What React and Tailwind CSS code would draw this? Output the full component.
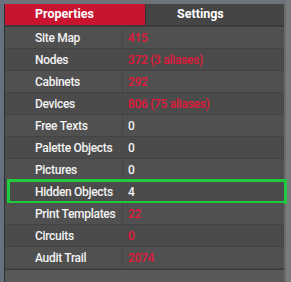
import React from "react";

const rows = [
  { label: "Site Map", value: "415", red: true },
  { label: "Nodes", value: "372 (3 aliases)", red: true },
  { label: "Cabinets", value: "292", red: true },
  { label: "Devices", value: "806 (75 aliases)", red: true },
  { label: "Free Texts", value: "0" },
  { label: "Palette Objects", value: "0" },
  { label: "Pictures", value: "0" },
  { label: "Hidden Objects", value: "4", highlight: true },
  { label: "Print Templates", value: "22", red: true },
  { label: "Circuits", value: "0", red: true },
  { label: "Audit Trail", value: "2074", red: true },
];

export default function App() {
  return (
    <div
      className="w-[291px] h-[282px] bg-[#6e737a] flex overflow-hidden"
      style={{ fontFamily: "Roboto, 'Liberation Sans', sans-serif" }}
    >
      <div className="w-[4px] bg-[#66717d]" />
      <div className="w-[280px] mt-[4px] bg-[#4b4b4b] border-l border-[#2c2f33] flex flex-col">
        {/* Tabs */}
        <div className="flex h-[21px] text-[12.5px] font-bold text-white border-b-2 border-[#3c3c3c] box-content">
          <div className="w-[140px] bg-[#c8142f] flex items-center pl-[30px]">Properties</div>
          <div className="flex-1 bg-[#454545] border-l border-[#353535] flex items-center pl-[31px]">
            Settings
          </div>
        </div>

        {/* Rows */}
        <div className="relative flex flex-col text-[12px] font-medium tracking-[-0.3px] whitespace-nowrap">
          {rows.map((r, i) => (
            <div
              key={r.label}
              className={`relative flex h-[22px] items-center border-b border-[#434343] ${
                i % 2 === 0 ? "bg-[#505050]" : "bg-[#4b4b4b]"
              }`}
            >
              <div className="w-[118px] pl-[30px] text-[#f3f3f3] h-full flex items-center border-r border-[#474747]">
                {r.label}
              </div>
              <div className={`pl-[5px] ${r.red ? "text-[#e2183a]" : "text-[#f3f3f3]"}`}>
                {r.value}
              </div>
              {r.highlight && (
                <div className="absolute -top-[2px] -bottom-[2px] left-[2px] -right-[3px] border-[3px] border-[#1fcb3c]" />
              )}
            </div>
          ))}
        </div>
        <div className="flex-1 bg-[#595959] border-t border-[#3a3a3a]" />
      </div>
      <div className="w-[2px] mt-[4px] bg-[#6a6a6a]" />
      <div className="flex-1 bg-[#7b7b7b]" />
    </div>
  );
}
